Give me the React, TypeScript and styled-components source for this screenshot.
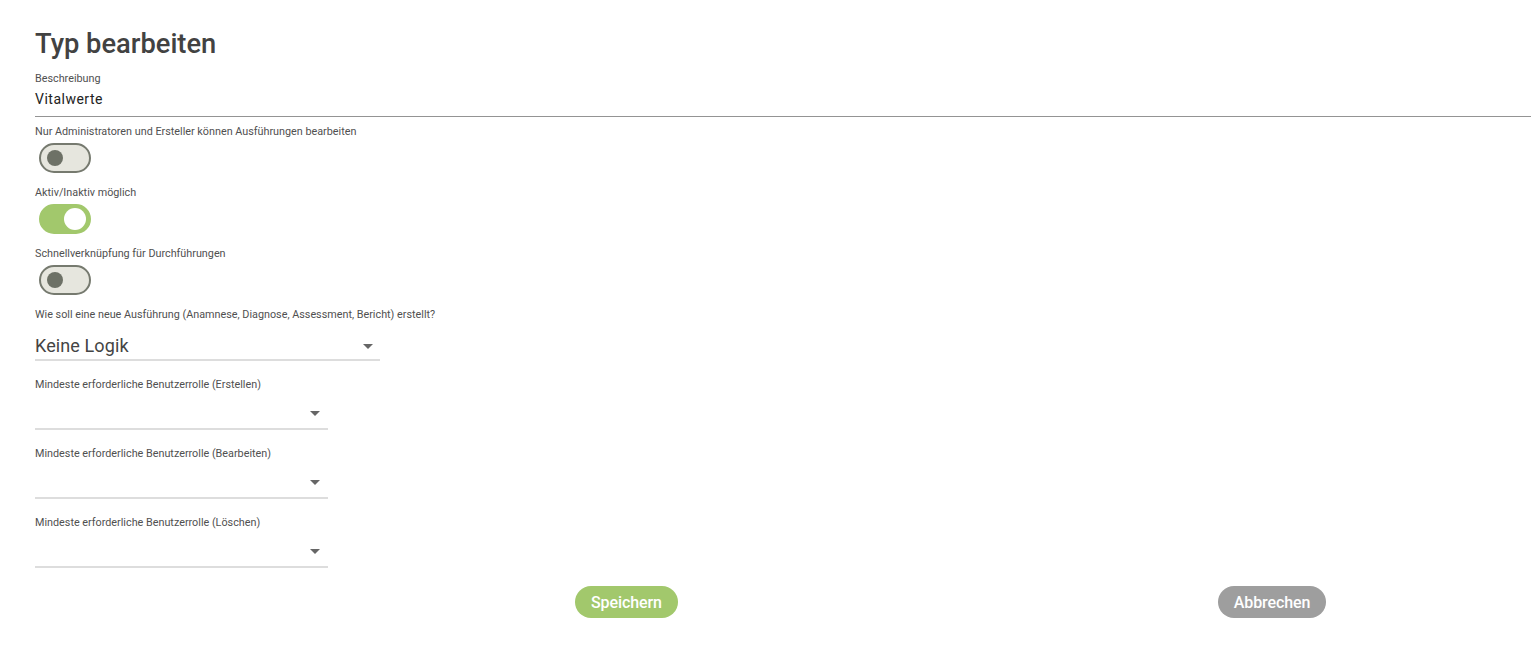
import React, { useState } from 'react';
import styled, { createGlobalStyle } from 'styled-components';

const GlobalStyle = createGlobalStyle`
    html, body {
        margin: 0;
        padding: 0;
        background: #ffffff;
        overflow: hidden;
    }
    body {
        font-family: Roboto, "Liberation Sans", Arial, sans-serif;
    }
`;

type ToggleProps = { checked: boolean; onChange: () => void };

const Toggle = ({ checked, onChange }: ToggleProps) => (
    <ToggleTrack $on={checked} onClick={onChange} role="switch" aria-checked={checked}>
        <ToggleKnob $on={checked} />
    </ToggleTrack>
);

type SelectProps = { value?: string; wide?: boolean };

const Select = ({ value, wide }: SelectProps) => (
    <SelectBox $wide={wide}>
        <SelectValue>{value}</SelectValue>
        <Arrow />
    </SelectBox>
);

export default function App() {
    const [adminOnly, setAdminOnly] = useState(false);
    const [activeToggle, setActiveToggle] = useState(true);
    const [shortcut, setShortcut] = useState(false);

    return (
        <Page>
            <GlobalStyle />
            <Title>Typ bearbeiten</Title>

            <Label $gap={12}>Beschreibung</Label>
            <TextInput>Vitalwerte</TextInput>

            <Label $gap={8}>Nur Administratoren und Ersteller können Ausführungen bearbeiten</Label>
            <Toggle checked={adminOnly} onChange={() => setAdminOnly(!adminOnly)} />

            <Label $gap={13}>Aktiv/Inaktiv möglich</Label>
            <Toggle checked={activeToggle} onChange={() => setActiveToggle(!activeToggle)} />

            <Label $gap={13}>Schnellverknüpfung für Durchführungen</Label>
            <Toggle checked={shortcut} onChange={() => setShortcut(!shortcut)} />

            <Label $gap={13}>Wie soll eine neue Ausführung (Anamnese, Diagnose, Assessment, Bericht) erstellt?</Label>
            <Select value="Keine Logik" wide />

            <Label $gap={17}>Mindeste erforderliche Benutzerrolle (Erstellen)</Label>
            <Select />

            <Label $gap={17}>Mindeste erforderliche Benutzerrolle (Bearbeiten)</Label>
            <Select />

            <Label $gap={17}>Mindeste erforderliche Benutzerrolle (Löschen)</Label>
            <Select />

            <ButtonRow>
                <Button $variant="primary">Speichern</Button>
                <Button $variant="secondary">Abbrechen</Button>
            </ButtonRow>
        </Page>
    );
}

const Page = styled.div`
    display: flex;
    flex-direction: column;
    align-items: flex-start;
    padding: 28px 0 40px 35px;
`;

const Title = styled.h1`
    margin: 0;
    font-size: 27.3px;
    line-height: 32px;
    font-weight: 500;
    color: #424242;
`;

const Label = styled.div<{ $gap: number }>`
    margin-top: ${p => p.$gap}px;
    font-size: 10.8px;
    line-height: 13px;
    color: #505050;
`;

const TextInput = styled.div`
    align-self: stretch;
    margin-top: 4px;
    font-size: 14px;
    line-height: 20px;
    color: #222222;
    padding-bottom: 7px;
    border-bottom: 1px solid #949494;
    letter-spacing: 0.5px;
`;

const ToggleTrack = styled.div<{ $on: boolean }>`
    position: relative;
    box-sizing: border-box;
    margin: 5px 0 0 4px;
    width: 52px;
    height: 30px;
    border-radius: 15px;
    border: 2px solid ${p => (p.$on ? '#a2c86c' : '#767a6f')};
    background: ${p => (p.$on ? '#a2c86c' : '#e6e6de')};
    cursor: pointer;
`;

const ToggleKnob = styled.div<{ $on: boolean }>`
    position: absolute;
    top: 50%;
    border-radius: 50%;
    transform: translateY(-50%);
    ${p =>
        p.$on
            ? `right: 3px; width: 22px; height: 22px; background: #ffffff;`
            : `left: 6px; width: 16px; height: 16px; background: #6d7166;`}
`;

const SelectBox = styled.div<{ $wide?: boolean }>`
    display: flex;
    align-items: center;
    justify-content: space-between;
    box-sizing: border-box;
    width: ${p => (p.$wide ? 345 : 293)}px;
    margin-top: ${p => (p.$wide ? 13 : 4)}px;
    height: ${p => (p.$wide ? 27 : 35)}px;
    padding: ${p => (p.$wide ? '0 7px 1px 0' : '3px 8px 0 0')};
    border-bottom: 2px solid #dddddd;
`;

const SelectValue = styled.span`
    font-size: 18px;
    line-height: 24px;
    color: #444444;
    letter-spacing: 0.1px;
`;

const Arrow = styled.span`
    width: 0;
    height: 0;
    border-left: 5px solid transparent;
    border-right: 5px solid transparent;
    border-top: 5px solid #666666;
`;

const ButtonRow = styled.div`
    display: flex;
    gap: 540px;
    margin-top: 18px;
    padding-left: 540px;
`;

const Button = styled.button<{ $variant: 'primary' | 'secondary' }>`
    height: 32px;
    padding: 0 16px;
    border: none;
    border-radius: 16px;
    font-family: Roboto, "Liberation Sans", Arial, sans-serif;
    font-size: 16px;
    font-weight: 500;
    letter-spacing: -0.1px;
    color: #ffffff;
    background: ${p => (p.$variant === 'primary' ? '#a2c86c' : '#9e9e9e')};
    cursor: pointer;
`;
